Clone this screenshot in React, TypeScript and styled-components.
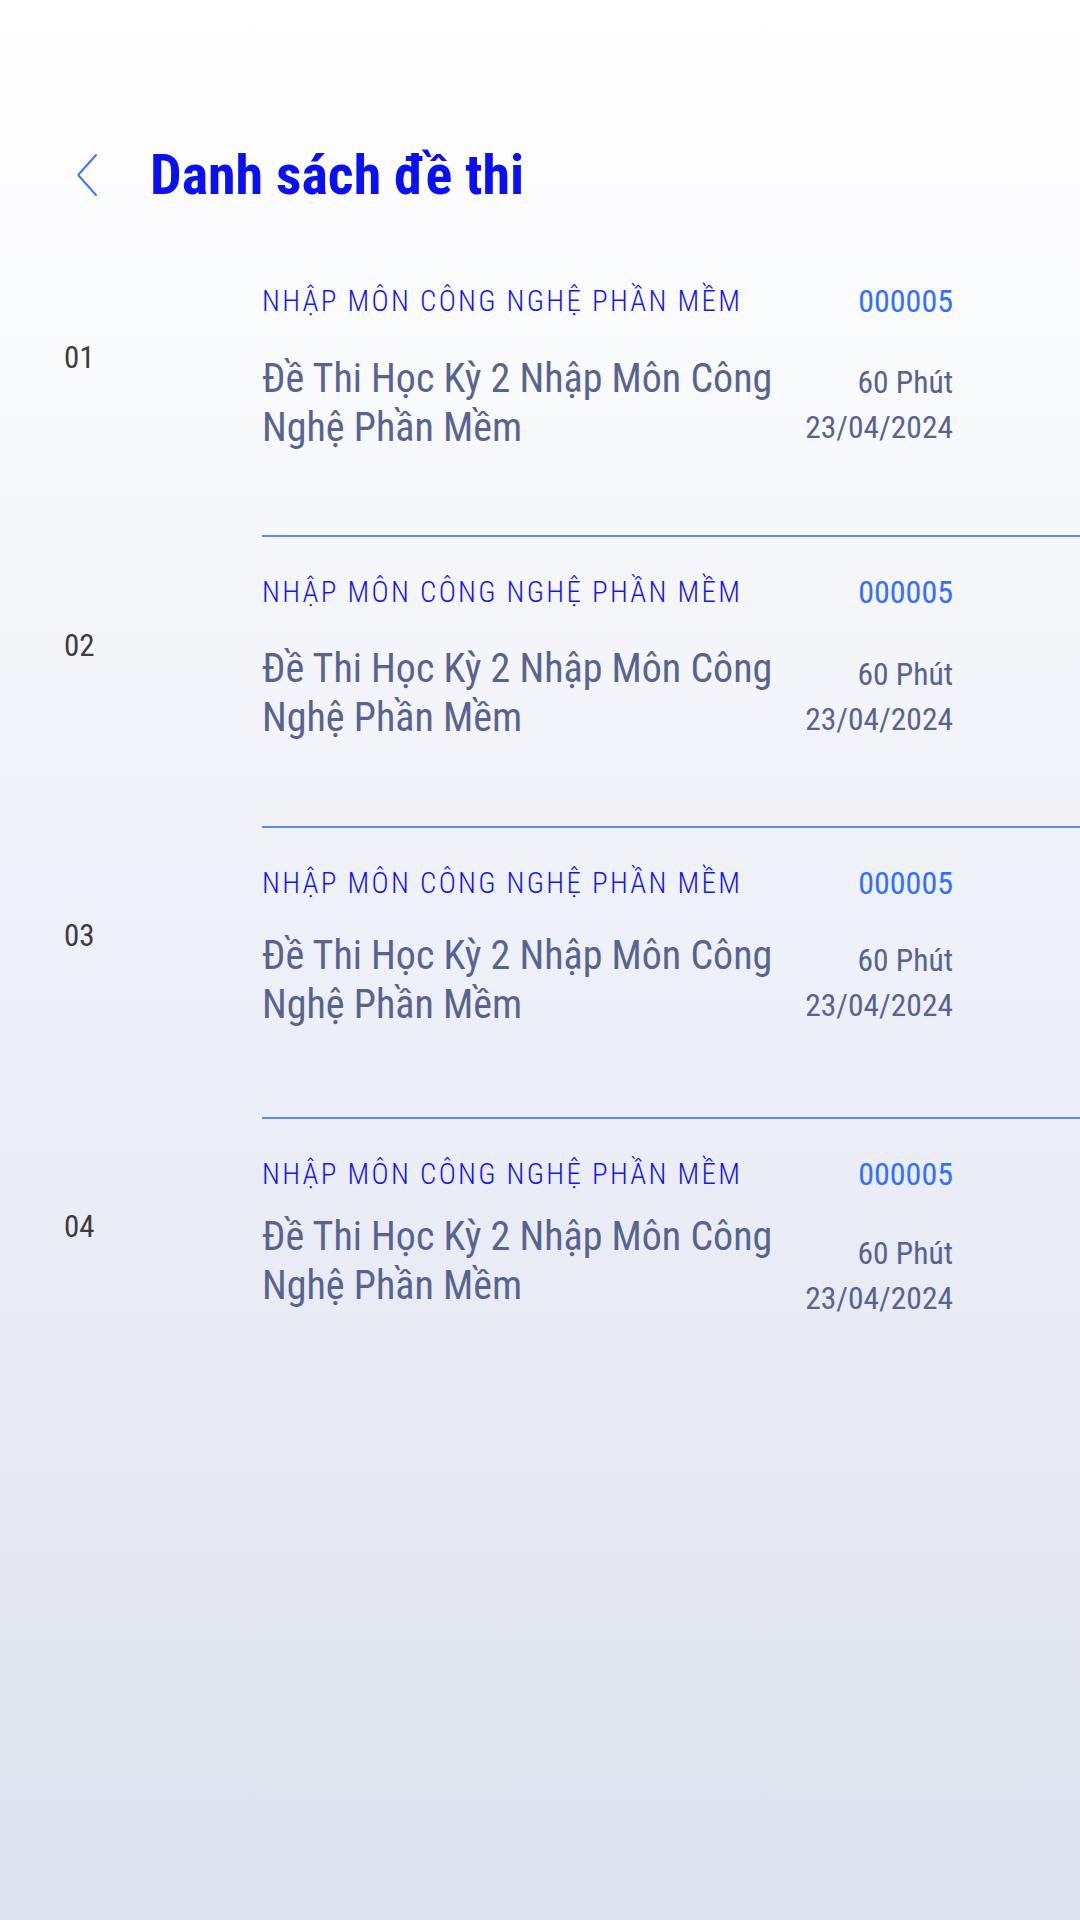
import React from "react";
import styled, { createGlobalStyle } from "styled-components";

const GlobalStyle = createGlobalStyle`
  html, body { margin: 0; padding: 0; }
  body {
    font-family: "Roboto Condensed", Roboto, "Liberation Sans", sans-serif;
    background: #dfe3ef;
  }
`;

const Page = styled.div`
  width: 1080px;
  min-height: 1920px;
  box-sizing: border-box;
  background: linear-gradient(180deg, #ffffff 0%, #f7f8fb 25%, #eceff7 55%, #dfe3ef 100%);
  overflow: hidden;
`;

const Header = styled.header`
  display: flex;
  align-items: center;
  height: 100px;
  padding: 125px 0 19px 76px;
  gap: 52px;
`;

const BackButton = styled.button`
  display: flex;
  align-items: center;
  justify-content: center;
  width: 22px;
  height: 44px;
  padding: 0;
  border: none;
  background: transparent;
  cursor: pointer;
`;

const Title = styled.h1`
  margin: 0;
  font-family: "Roboto Condensed", sans-serif;
  font-weight: 700;
  font-size: 56px;
  line-height: 70px;
  color: #0a10ef;
`;

const List = styled.ul`
  list-style: none;
  margin: 0;
  padding: 0;
`;

const Row = styled.li`
  display: grid;
  grid-template-columns: 262px 1fr;
  height: 291px;
`;

const Index = styled.div<{ $top: number }>`
  box-sizing: border-box;
  padding: ${(p) => p.$top}px 0 0 64px;
  font-size: 31px;
  line-height: 36px;
  color: #3d3d3f;
`;

const Body = styled.div<{ $first: boolean }>`
  box-sizing: border-box;
  border-top: 2px solid ${(p) => (p.$first ? "transparent" : "#5b8bf4")};
  padding: 37px 127px 0 0;
`;

const TopLine = styled.div`
  display: flex;
  justify-content: space-between;
  align-items: center;
  height: 36px;
`;

const Subject = styled.span`
  font-weight: 300;
  font-size: 29px;
  line-height: 36px;
  letter-spacing: 2.3px;
  color: #1414f5;
  text-transform: uppercase;
`;

const Code = styled.span`
  font-size: 32px;
  line-height: 36px;
  color: #3370ff;
`;

const MainLine = styled.div<{ $gap: number }>`
  display: flex;
  justify-content: space-between;
  align-items: flex-start;
  margin-top: ${(p) => p.$gap}px;
`;

const ExamName = styled.div`
  width: 530px;
  font-size: 40px;
  line-height: 49px;
  color: #58648f;
`;

const Meta = styled.div<{ $offset: number }>`
  display: flex;
  flex-direction: column;
  align-items: flex-end;
  margin-top: ${(p) => p.$offset}px;
  font-size: 31.5px;
  line-height: 45px;
  color: #58648f;
`;

type Exam = {
  no: string;
  subject: string;
  code: string;
  name: string;
  duration: string;
  date: string;
  numTop: number;
  gap: number;
  metaOffset: number;
};

const exams: Exam[] = [
  { no: "01", subject: "Nhập môn công nghệ phần mềm", code: "000005", name: "Đề Thi Học Kỳ 2 Nhập Môn Công Nghệ Phần Mềm", duration: "60 Phút", date: "23/04/2024", numTop: 96, gap: 35, metaOffset: 6 },
  { no: "02", subject: "Nhập môn công nghệ phần mềm", code: "000005", name: "Đề Thi Học Kỳ 2 Nhập Môn Công Nghệ Phần Mềm", duration: "60 Phút", date: "23/04/2024", numTop: 93, gap: 34, metaOffset: 8 },
  { no: "03", subject: "Nhập môn công nghệ phần mềm", code: "000005", name: "Đề Thi Học Kỳ 2 Nhập Môn Công Nghệ Phần Mềm", duration: "60 Phút", date: "23/04/2024", numTop: 92, gap: 30, metaOffset: 7 },
  { no: "04", subject: "Nhập môn công nghệ phần mềm", code: "000005", name: "Đề Thi Học Kỳ 2 Nhập Môn Công Nghệ Phần Mềm", duration: "60 Phút", date: "23/04/2024", numTop: 92, gap: 20, metaOffset: 19 },
];

function ChevronLeft() {
  return (
    <svg width="22" height="44" viewBox="0 0 22 44" fill="none">
      <path d="M20 2 L3 21 Q2 22 3 23 L20 42" stroke="#3a78f5" strokeWidth="2" strokeLinecap="round" strokeLinejoin="round" />
    </svg>
  );
}

export default function App() {
  return (
    <>
      <GlobalStyle />
      <Page>
        <Header>
          <BackButton aria-label="Quay lại">
            <ChevronLeft />
          </BackButton>
          <Title>Danh sách đề thi</Title>
        </Header>
        <List>
          {exams.map((e, i) => (
            <Row key={e.no}>
              <Index $top={e.numTop}>{e.no}</Index>
              <Body $first={i === 0}>
                <TopLine>
                  <Subject>{e.subject}</Subject>
                  <Code>{e.code}</Code>
                </TopLine>
                <MainLine $gap={e.gap}>
                  <ExamName>{e.name}</ExamName>
                  <Meta $offset={e.metaOffset}>
                    <span>{e.duration}</span>
                    <span>{e.date}</span>
                  </Meta>
                </MainLine>
              </Body>
            </Row>
          ))}
        </List>
      </Page>
    </>
  );
}
